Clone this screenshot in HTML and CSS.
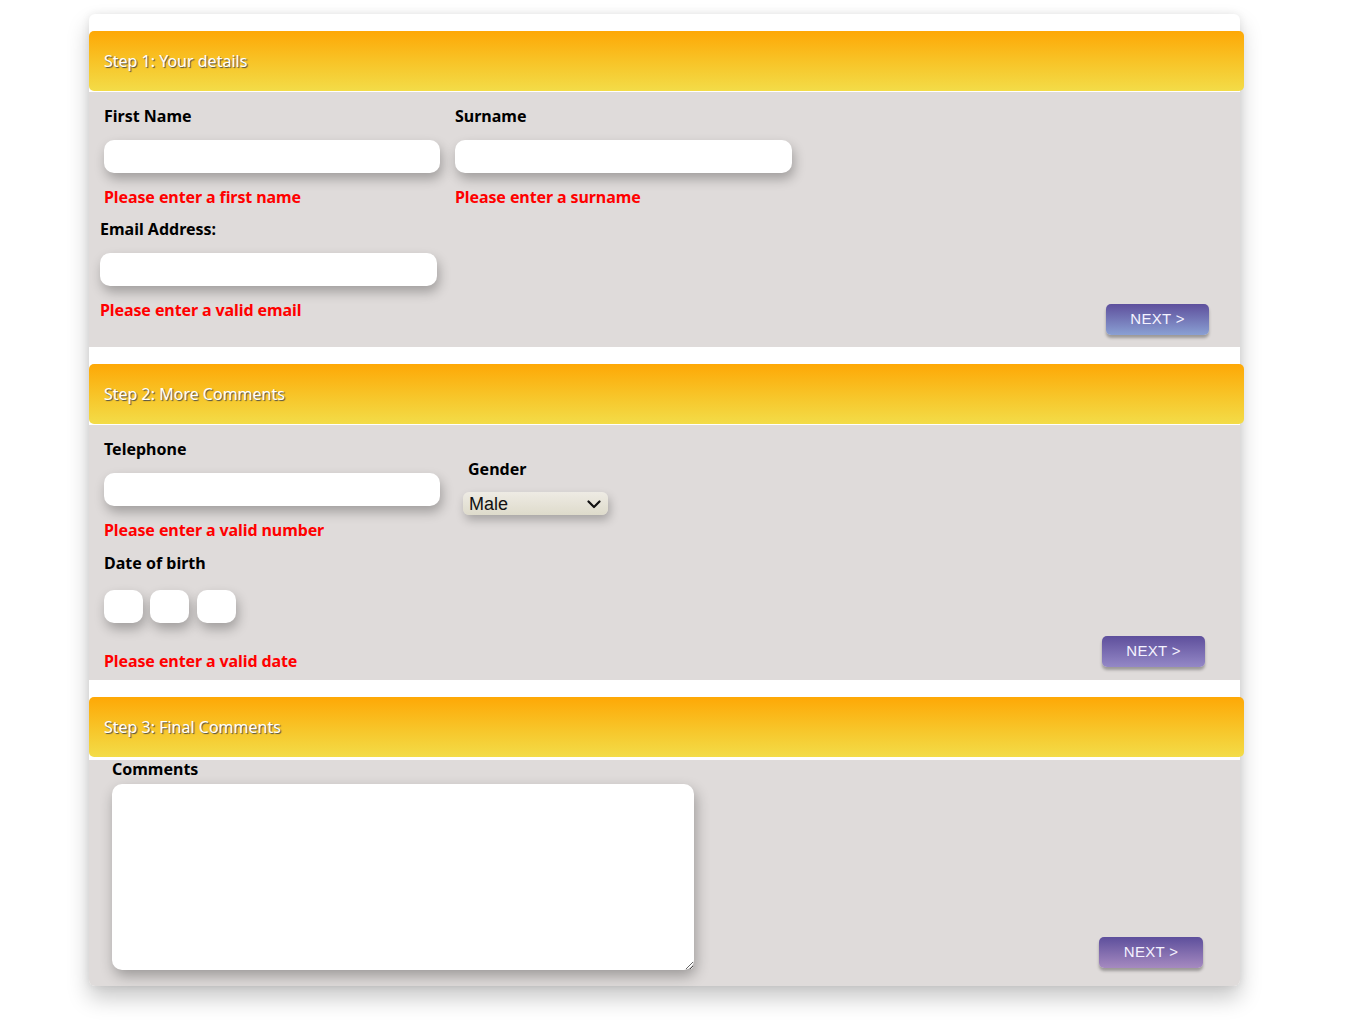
FILE: index.html
```html
<!DOCTYPE html>
<html lang="en">
<head>
<meta charset="utf-8">
<title>Form</title>
<link rel="stylesheet" href="styles.css">
</head>
<body>
<div class="form-box">
  <section class="step">
    <h2 class="step-head">Step 1: Your details</h2>
    <div class="panel panel-1">
      <div class="fields">
        <div class="row">
          <div class="field">
            <label class="lbl">First Name</label>
            <input class="txt" type="text">
            <p class="err">Please enter a first name</p>
          </div>
          <div class="field field-2">
            <label class="lbl">Surname</label>
            <input class="txt" type="text">
            <p class="err">Please enter a surname</p>
          </div>
        </div>
        <div class="field field-email">
          <label class="lbl">Email Address:</label>
          <input class="txt" type="text">
          <p class="err">Please enter a valid email</p>
        </div>
      </div>
      <button class="next next-1">NEXT &gt;</button>
    </div>
  </section>

  <section class="step">
    <h2 class="step-head">Step 2: More Comments</h2>
    <div class="panel panel-2">
      <div class="fields">
        <div class="row">
          <div class="field">
            <label class="lbl">Telephone</label>
            <input class="txt" type="text">
            <p class="err">Please enter a valid number</p>
          </div>
          <div class="field field-gender">
            <label class="lbl">Gender</label>
            <div class="select-wrap">
              <select class="sel"><option>Male</option><option>Female</option></select>
              <svg class="chev" width="14" height="9" viewBox="0 0 14 9"><path d="M1.5 1.5 L7 7 L12.5 1.5" fill="none" stroke="#111" stroke-width="2.2" stroke-linecap="round" stroke-linejoin="round"/></svg>
            </div>
          </div>
        </div>
        <div class="field field-dob">
          <label class="lbl">Date of birth</label>
          <div class="dob">
            <input class="txt small" type="text">
            <input class="txt small" type="text">
            <input class="txt small" type="text">
          </div>
          <p class="err err-dob">Please enter a valid date</p>
        </div>
      </div>
      <button class="next next-2">NEXT &gt;</button>
    </div>
  </section>

  <section class="step">
    <h2 class="step-head step-head-3">Step 3: Final Comments</h2>
    <div class="panel panel-3">
      <div class="fields fields-3">
        <label class="lbl lbl-comments">Comments</label>
        <textarea class="area"></textarea>
      </div>
      <button class="next next-3">NEXT &gt;</button>
    </div>
  </section>
</div>
</body>
</html>
```

FILE: styles.css
```css
html, body {
  margin: 0;
  padding: 0;
  background: #ffffff;
}
body {
  font-family: "Noto Sans", "Open Sans", sans-serif;
  padding: 14px 0 42px 89px;
}
.form-box {
  width: 1151px;
  padding-top: 17px;
  background: #ffffff;
  border-radius: 6px;
  box-shadow: 0 12px 22px rgba(0, 0, 0, 0.22), 0 0 8px rgba(0, 0, 0, 0.08);
}
.step-head {
  margin: 0 -4px 0 0;
  height: 60px;
  display: flex;
  align-items: center;
  padding-left: 15px;
  box-sizing: border-box;
  font-size: 16px;
  font-weight: 400;
  color: #ffffff;
  text-shadow: 1px 1px 1px #4a4a4a;
  border-radius: 5px;
  background: linear-gradient(to bottom, #fea806 0%, #f7c62a 55%, #f3dc48 100%);
}
.panel {
  background: #dfdbda;
  display: flex;
  justify-content: space-between;
  align-items: flex-end;
}
.panel-1 {
  margin-top: 1px;
  padding: 14px 31px 12px 15px;
  height: 255px;
  box-sizing: border-box;
}
.panel-2 {
  margin-top: 1px;
  padding: 14px 35px 13px 15px;
  height: 255px;
  box-sizing: border-box;
}
.panel-3 {
  margin-top: 3px;
  padding: 0 37px 18px 23px;
  height: 226px;
  box-sizing: border-box;
  border-radius: 0 0 6px 6px;
}
.step + .step {
  margin-top: 17px;
}
.fields {
  display: flex;
  flex-direction: column;
  align-self: flex-start;
}
.row {
  display: flex;
  gap: 15px;
}
.field {
  display: flex;
  flex-direction: column;
  align-items: flex-start;
}
.lbl {
  display: block;
  font-size: 16px;
  font-weight: 700;
  line-height: 20px;
  color: #000;
}
.txt {
  display: block;
  margin-top: 14px;
  width: 336px;
  height: 33px;
  box-sizing: border-box;
  border: none;
  border-radius: 10px;
  background: #fff;
  box-shadow: 2px 6px 12px rgba(0, 0, 0, 0.28);
  outline: none;
}
.field-2 .txt {
  width: 337px;
}
.err {
  margin: 14px 0 0 0;
  font-size: 16px;
  font-weight: 700;
  line-height: 20px;
  color: #ff0000;
  letter-spacing: -0.1px;
}
.field-email {
  margin-left: -4px;
  margin-top: 12px;
}
.field-email .txt {
  width: 337px;
}
.field-gender {
  margin-left: 8px;
  margin-top: 20px;
}
.field-gender .lbl {
  margin-left: 5px;
}
.select-wrap {
  position: relative;
  margin-top: 13px;
}
.sel {
  appearance: none;
  -webkit-appearance: none;
  display: block;
  width: 145px;
  height: 23px;
  border: none;
  border-radius: 6px;
  padding: 0 0 0 6px;
  font-family: "Liberation Sans", Arial, sans-serif;
  font-size: 18px;
  color: #111;
  background: linear-gradient(to bottom, #eeebe4 0%, #dedbcb 100%);
  box-shadow: 2px 5px 10px rgba(0, 0, 0, 0.25);
  outline: none;
}
.chev {
  position: absolute;
  right: 7px;
  top: 8px;
  pointer-events: none;
}
.field-dob {
  margin-top: 13px;
}
.dob {
  display: flex;
  gap: 7px;
  margin-top: 3px;
}
.dob .txt.small:last-child {
  margin-left: 1px;
}
.txt.small {
  width: 39px;
  margin-top: 14px;
}
.err-dob {
  margin-top: 28px;
}
.fields-3 {
  align-self: flex-start;
}
.lbl-comments {
  line-height: 18px;
}
.area {
  display: block;
  margin-top: 6px;
  width: 582px;
  height: 186px;
  box-sizing: border-box;
  border: none;
  border-radius: 10px;
  background: #fff;
  box-shadow: 2px 6px 14px rgba(0, 0, 0, 0.3);
  outline: none;
}
.next {
  width: 103px;
  height: 31px;
  border: none;
  border-radius: 5px;
  padding: 0 0 2px 0;
  font-family: "Liberation Sans", Arial, sans-serif;
  font-size: 15px;
  color: #f4f2ff;
  letter-spacing: 0.3px;
  box-shadow: 0 3px 3px rgba(0, 0, 0, 0.3);
  cursor: pointer;
}
.next-1 {
  background: linear-gradient(to bottom, #5e4f9c 0%, #8aa0d3 100%);
}
.next-2 {
  background: linear-gradient(to bottom, #5e4f9c 0%, #9488c6 100%);
}
.next-3 {
  width: 104px;
  background: linear-gradient(to bottom, #5d4f9c 0%, #a68ac0 100%);
}
```
